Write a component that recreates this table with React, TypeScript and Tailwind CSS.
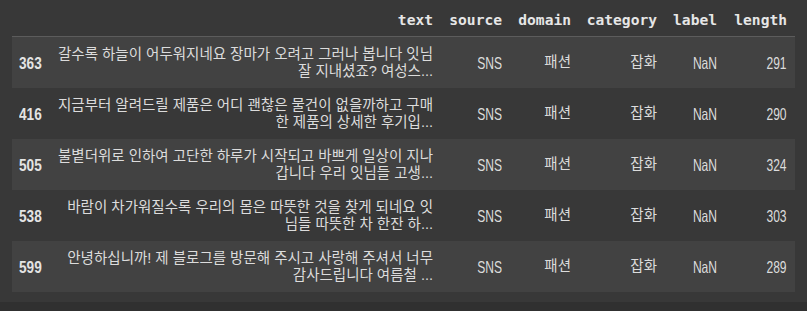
import React from "react";

type Row = {
  idx: string;
  lines: [string, string];
  source: string;
  domain: string;
  category: string;
  label: string;
  length: string;
};

const rows: Row[] = [
  { idx: "363", lines: ["갈수록 하늘이 어두워지네요 장마가 오려고 그러나 봅니다 잇님", "잘 지내셨죠? 여성스..."], source: "SNS", domain: "패션", category: "잡화", label: "NaN", length: "291" },
  { idx: "416", lines: ["지금부터 알려드릴 제품은 어디 괜찮은 물건이 없을까하고 구매", "한 제품의 상세한 후기입..."], source: "SNS", domain: "패션", category: "잡화", label: "NaN", length: "290" },
  { idx: "505", lines: ["불볕더위로 인하여 고단한 하루가 시작되고 바쁘게 일상이 지나", "갑니다 우리 잇님들 고생..."], source: "SNS", domain: "패션", category: "잡화", label: "NaN", length: "324" },
  { idx: "538", lines: ["바람이 차가워질수록 우리의 몸은 따뜻한 것을 찾게 되네요 잇", "님들 따뜻한 차 한잔 하..."], source: "SNS", domain: "패션", category: "잡화", label: "NaN", length: "303" },
  { idx: "599", lines: ["안녕하십니까! 제 블로그를 방문해 주시고 사랑해 주셔서 너무", "감사드립니다 여름철 ..."], source: "SNS", domain: "패션", category: "잡화", label: "NaN", length: "289" },
];

const cols = "grid grid-cols-[37px_392px_69px_69px_86px_60px_70px]";
const headers = ["text", "source", "domain", "category", "label", "length"];

// narrow latin glyphs like the notebook's condensed face
const Narrow = ({ children }: { children: React.ReactNode }) => (
  <span className="inline-block origin-right scale-x-[0.73] text-[16.5px] leading-none">{children}</span>
);

export default function App() {
  return (
    <div className="w-[807px] h-[311px] bg-[#383838] flex flex-col overflow-hidden font-['Liberation_Sans','Noto_Sans_CJK_KR',sans-serif]">
      <div className="pl-3 pr-3">
        <div className={`${cols} h-[36px] items-center border-b border-[#5c5c5c] box-content`}>
          <div />
          {headers.map((h) => (
            <div key={h} className="text-right pr-2 pt-1 font-['DejaVu_Sans_Mono',monospace] font-bold text-[14.6px] text-[#e6e6e6]">
              {h}
            </div>
          ))}
        </div>
        {rows.map((r, i) => (
          <div key={r.idx} className={`${cols} h-[51px] items-center text-[#dcdcdc] ${i % 2 === 0 ? "bg-[#424242]" : ""}`}>
            <div className="pl-[7px] pt-[2px]">
              <span className="inline-block origin-left scale-x-[0.85] text-[16px] leading-none font-bold text-[#e4e4e4]">{r.idx}</span>
            </div>
            <div className="text-right pr-2 text-[14.5px] leading-[17px] pt-[1px]">
              <div>{r.lines[0]}</div>
              <div>{r.lines[1]}</div>
            </div>
            <div className="text-right pr-2 pt-[2px]"><Narrow>{r.source}</Narrow></div>
            <div className="text-right pr-2 text-[14.5px]">{r.domain}</div>
            <div className="text-right pr-2 text-[14.5px]">{r.category}</div>
            <div className="text-right pr-2 pt-[2px]"><Narrow>{r.label}</Narrow></div>
            <div className="text-right pr-2 pt-[2px]"><Narrow>{r.length}</Narrow></div>
          </div>
        ))}
      </div>
      <div className="mt-auto h-[9px] bg-[#303030]" />
    </div>
  );
}
